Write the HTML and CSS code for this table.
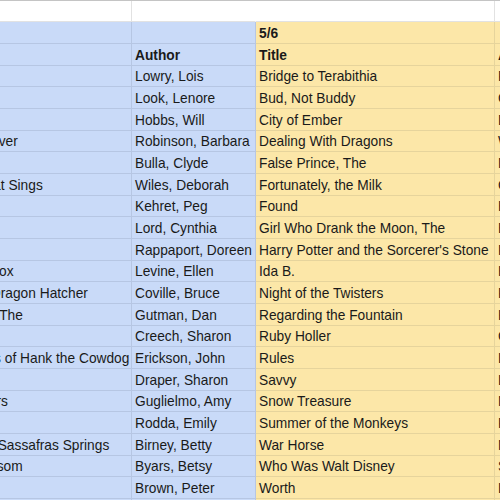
FILE: index.html
```html
<!DOCTYPE html>
<html>
<head>
<meta charset="utf-8">
<link rel="stylesheet" href="styles.css">
</head>
<body>
<div class="sheet">
  <div class="c w"></div><div class="c w nb"></div><div class="c w"></div><div class="c w"></div>

  <div class="c b"></div><div class="c b"></div><div class="c y h">5/6</div><div class="c y"></div>
  <div class="c b h">Title</div><div class="c b h">Author</div><div class="c y h">Title</div><div class="c y h">Author</div>
  <div class="c b">Number the Stars</div><div class="c b">Lowry, Lois</div><div class="c y">Bridge to Terabithia</div><div class="c y">Paterson, Katherine</div>
  <div class="c b">Alvin Ho</div><div class="c b">Look, Lenore</div><div class="c y">Bud, Not Buddy</div><div class="c y">Curtis, Christopher Paul</div>
  <div class="c b">Bearstone</div><div class="c b">Hobbs, Will</div><div class="c y">City of Ember</div><div class="c y">DuPrau, Jeanne</div>
  <div class="c b">Best School Year Ever</div><div class="c b">Robinson, Barbara</div><div class="c y">Dealing With Dragons</div><div class="c y">Wrede, Patricia</div>
  <div class="c b">Chalk Box Kid</div><div class="c b">Bulla, Clyde</div><div class="c y">False Prince, The</div><div class="c y">Nielsen, Jennifer</div>
  <div class="c b">Each Little Bird That Sings</div><div class="c b">Wiles, Deborah</div><div class="c y">Fortunately, the Milk</div><div class="c y">Gaiman, Neil</div>
  <div class="c b">Earthquake Terror</div><div class="c b">Kehret, Peg</div><div class="c y">Found</div><div class="c y">Haddix, Margaret Peterson</div>
  <div class="c b">Half a Chance</div><div class="c b">Lord, Cynthia</div><div class="c y">Girl Who Drank the Moon, The</div><div class="c y">Barnhill, Kelly</div>
  <div class="c b">Helen's Big World</div><div class="c b">Rappaport, Doreen</div><div class="c y">Harry Potter and the Sorcerer's Stone</div><div class="c y">Rowling, J.K.</div>
  <div class="c b">Henry's Freedom Box</div><div class="c b">Levine, Ellen</div><div class="c y">Ida B.</div><div class="c y">Hannigan, Katherine</div>
  <div class="c b">Jeremy Thatcher, Dragon Hatcher</div><div class="c b">Coville, Bruce</div><div class="c y">Night of the Twisters</div><div class="c y">Ruckman, Ivy</div>
  <div class="c b">Million Dollar Shot, The</div><div class="c b">Gutman, Dan</div><div class="c y">Regarding the Fountain</div><div class="c y">Klise, Kate</div>
  <div class="c b">Love That Dog</div><div class="c b">Creech, Sharon</div><div class="c y">Ruby Holler</div><div class="c y">Creech, Sharon</div>
  <div class="c b">Original Adventures of Hank the Cowdog</div><div class="c b">Erickson, John</div><div class="c y">Rules</div><div class="c y">Lord, Cynthia</div>
  <div class="c b">Out of My Mind</div><div class="c b">Draper, Sharon</div><div class="c y">Savvy</div><div class="c y">Law, Ingrid</div>
  <div class="c b">Pocket Full of Colors</div><div class="c b">Guglielmo, Amy</div><div class="c y">Snow Treasure</div><div class="c y">McSwigan, Marie</div>
  <div class="c b">Rowan of Rin</div><div class="c b">Rodda, Emily</div><div class="c y">Summer of the Monkeys</div><div class="c y">Rawls, Wilson</div>
  <div class="c b">Seven Wonders of Sassafras Springs</div><div class="c b">Birney, Betty</div><div class="c y">War Horse</div><div class="c y">Morpurgo, Michael</div>
  <div class="c b">Wanted...Mud Blossom</div><div class="c b">Byars, Betsy</div><div class="c y">Who Was Walt Disney</div><div class="c y">Stewart, Whitney</div>
  <div class="c b">Wild Robot, The</div><div class="c b">Brown, Peter</div><div class="c y">Worth</div><div class="c y">LaFaye, A.</div>
  <div class="c b"></div><div class="c b"></div><div class="c y"></div><div class="c y"></div>
</div>
</body>
</html>
```
FILE: styles.css
```css
html, body {
  margin: 0;
  padding: 0;
  background: #ffffff;
  overflow: hidden;
  width: 500px;
  height: 500px;
}

.sheet {
  display: grid;
  grid-template-columns: 254px 124px 239px 200px;
  grid-template-rows: 21px;
  grid-auto-rows: 22px 22px 21px;
  margin-left: -122px;
  border-top: 1px solid #c4c4c4;
  font-family: "Liberation Sans", Arial, sans-serif;
  font-size: 13.75px;
  color: #1a1a1a;
}

.c {
  box-sizing: border-box;
  display: flex;
  align-items: center;
  padding: 1px 3px 0;
  white-space: nowrap;
  overflow: hidden;
  border-right: 1px solid;
  border-bottom: 1px solid;
}

.w {
  background: #ffffff;
  border-color: #e2e2e2;
}

.nb {
  border-right-color: #ffffff;
}

.b {
  background: #c9daf8;
  border-color: #b6c6e3;
}

.y {
  background: #fce7a8;
  border-color: #e6d49c;
}

.h {
  font-weight: bold;
}
```
